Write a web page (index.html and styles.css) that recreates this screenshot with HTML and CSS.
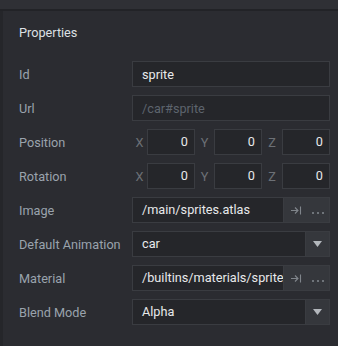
FILE: index.html
```html
<!DOCTYPE html>
<html lang="en">
<head>
    <meta charset="UTF-8">
    <title>Properties</title>
    <link rel="stylesheet" href="styles.css">
</head>
<body>
    <div class="topbar"></div>
    <div class="panel">
        <h2 class="title">Properties</h2>

        <div class="props">
            <div class="label">Id</div>
            <div class="field"><span class="value">sprite</span></div>

            <div class="label">Url</div>
            <div class="field"><span class="value muted">/car#sprite</span></div>

            <div class="label">Position</div>
            <div class="vec">
                <span class="axis">X</span><div class="num">0</div>
                <span class="axis">Y</span><div class="num">0</div>
                <span class="axis">Z</span><div class="num">0</div>
            </div>

            <div class="label">Rotation</div>
            <div class="vec">
                <span class="axis">X</span><div class="num">0</div>
                <span class="axis">Y</span><div class="num">0</div>
                <span class="axis">Z</span><div class="num">0</div>
            </div>

            <div class="label">Image</div>
            <div class="field resource">
                <span class="value">/main/sprites.atlas</span>
                <div class="btns">
                    <svg width="11" height="9" viewBox="0 0 11 9"><path d="M0 4.5h7M4 1.5l3 3-3 3M9.5 0.5v8" stroke="#80858b" fill="none" stroke-width="1.1"/></svg>
                    <svg width="12" height="3" viewBox="0 0 12 3"><path d="M0 1h2v2H0zM5 1h2v2H5zM10 1h2v2h-2z" fill="#6f747a"/></svg>
                </div>
            </div>

            <div class="label">Default Animation</div>
            <div class="field select">
                <span class="value">car</span>
                <div class="arrow"><svg width="9" height="6" viewBox="0 0 9 6"><path d="M0 0h9L4.5 6z" fill="#b3b7bc"/></svg></div>
            </div>

            <div class="label">Material</div>
            <div class="field resource">
                <span class="value">/builtins/materials/sprite.material</span>
                <div class="btns">
                    <svg width="11" height="9" viewBox="0 0 11 9"><path d="M0 4.5h7M4 1.5l3 3-3 3M9.5 0.5v8" stroke="#80858b" fill="none" stroke-width="1.1"/></svg>
                    <svg width="12" height="3" viewBox="0 0 12 3"><path d="M0 1h2v2H0zM5 1h2v2H5zM10 1h2v2h-2z" fill="#6f747a"/></svg>
                </div>
            </div>

            <div class="label">Blend Mode</div>
            <div class="field select">
                <span class="value">Alpha</span>
                <div class="arrow"><svg width="9" height="6" viewBox="0 0 9 6"><path d="M0 0h9L4.5 6z" fill="#b3b7bc"/></svg></div>
            </div>
        </div>
    </div>
</body>
</html>
```

FILE: styles.css
```css
body {
    margin: 0;
    background: #2b2c31;
    font-family: Roboto, "Noto Sans", sans-serif;
    font-size: 12.7px;
    height: 346px;
    overflow: hidden;
}

.topbar {
    height: 9px;
    background: #2f3035;
    border-bottom: 2px solid #222327;
}

.panel {
    border-left: 3px solid #25262a;
    padding: 0 8px 0 16px;
    height: 335px;
}

.title {
    margin: 0;
    padding-top: 14px;
    height: 36px;
    font-size: 12.7px;
    font-weight: normal;
    color: #dde0e4;
}

.props {
    display: grid;
    grid-template-columns: 113px 198px;
    grid-auto-rows: 26px;
    row-gap: 8px;
    align-items: center;
}

.label {
    color: #9aa3ad;
    white-space: nowrap;
}

.field {
    height: 26px;
    box-sizing: border-box;
    border: 1px solid #3a3c41;
    background: #25262a;
    display: flex;
    align-items: center;
    overflow: hidden;
}

.value {
    flex: 1;
    min-width: 0;
    padding-left: 9px;
    color: #e8e9eb;
    white-space: nowrap;
    overflow: hidden;
}

.value.muted {
    color: #5d646d;
}

.resource .value,
.select .value {
    border-right: 1px solid #3a3c41;
    height: 24px;
    line-height: 24px;
}

.btns {
    width: 45px;
    height: 24px;
    background: #35373c;
    display: flex;
    align-items: center;
    justify-content: space-between;
    padding: 0 5px 0 7px;
    box-sizing: border-box;
    flex-shrink: 0;
}

.btns svg:last-child {
    margin-top: 4px;
}

.arrow {
    width: 23px;
    height: 24px;
    background: #35373c;
    display: flex;
    align-items: center;
    justify-content: center;
    flex-shrink: 0;
}

.vec {
    display: grid;
    grid-template-columns: 15px 48px 19px 48px 20px 48px;
    align-items: center;
}

.axis {
    color: #6c7076;
    text-align: center;
}

.num {
    height: 26px;
    box-sizing: border-box;
    border: 1px solid #3a3c41;
    background: #25262a;
    color: #e8e9eb;
    text-align: right;
    padding-right: 6px;
    line-height: 24px;
}
```
